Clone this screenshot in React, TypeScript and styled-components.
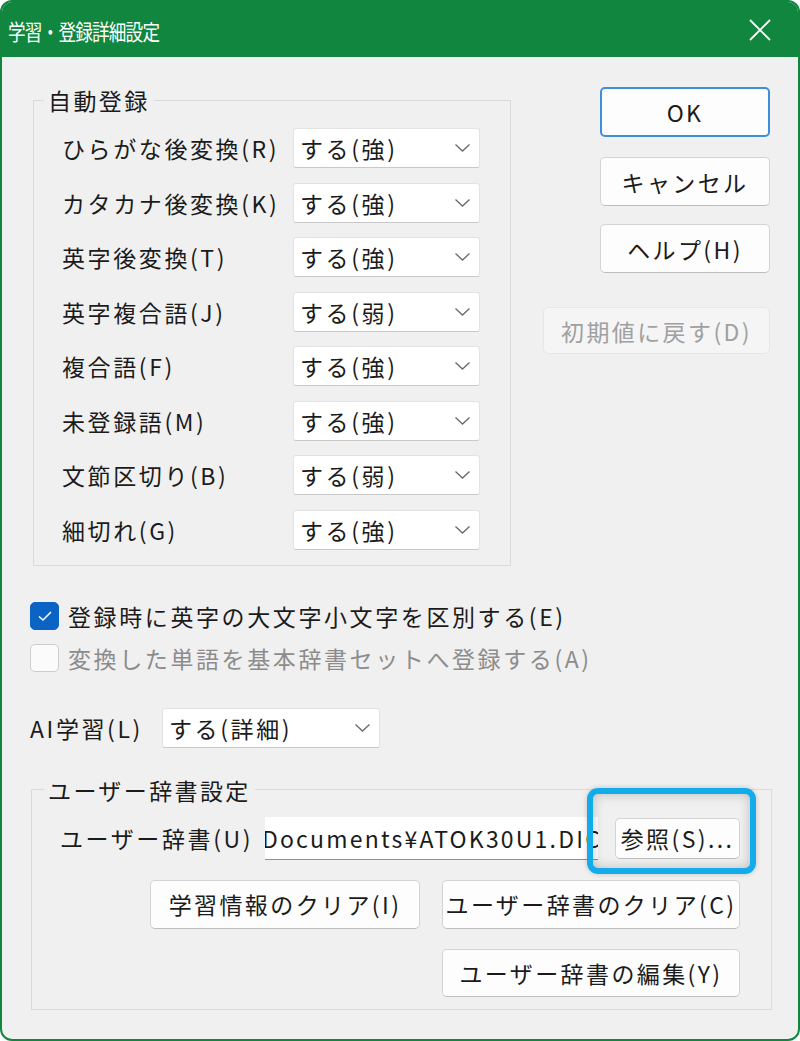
import React from 'react';
import styled, { createGlobalStyle } from 'styled-components';

const GlobalStyle = createGlobalStyle`
  html, body {
    margin: 0;
    padding: 0;
    background: #ffffff;
  }
  body {
    font-family: 'Noto Sans CJK JP', 'Noto Sans', sans-serif;
    color: #1b1b1b;
  }
  * {
    box-sizing: border-box;
  }
`;

const Window = styled.div`
  width: 800px;
  height: 1041px;
  display: flex;
  flex-direction: column;
  border: 2px solid #10863f;
  border-radius: 12px;
  overflow: hidden;
  background: #f0f0f0;
`;

const TitleBar = styled.div`
  height: 55px;
  flex-shrink: 0;
  display: flex;
  align-items: center;
  justify-content: space-between;
  padding: 0 27px 0 6px;
  background: #10863f;
  color: #ffffff;
`;

// the system caption font is narrower than anything installed here
const Title = styled.div`
  font-size: 22px;
  line-height: 26px;
  letter-spacing: -1px;
  white-space: nowrap;
  transform: scaleX(0.8);
  transform-origin: left center;
`;

const Body = styled.div`
  flex: 1;
  display: flex;
  flex-direction: column;
  padding: 29px 28px 0 28px;
`;

const TopRow = styled.div`
  display: flex;
  justify-content: space-between;
  align-items: flex-start;
`;

const Group = styled.fieldset<{ $width: number; $offset: number; $top?: number }>`
  width: ${({ $width }) => $width}px;
  margin: ${({ $top }) => $top ?? 0}px 0 0 ${({ $offset }) => $offset}px;
  padding: 0;
  border: 1px solid #dadada;
  border-radius: 0;
  min-width: 0;
`;

const Legend = styled.legend<{ $offset: number }>`
  margin-left: ${({ $offset }) => $offset}px;
  padding: 0 4px;
  font-size: 23px;
  line-height: 28px;
  letter-spacing: 2.4px;
`;

const OptionGrid = styled.div`
  display: grid;
  grid-template-columns: 231px 187px;
  row-gap: 14.5px;
  align-items: center;
  padding: 14px 0 15px 28px;
`;

const Label = styled.span<{ $muted?: boolean; $width?: number }>`
  ${({ $width }) => ($width ? `width: ${$width}px; flex-shrink: 0;` : '')}
  font-size: 23px;
  line-height: 28px;
  letter-spacing: 2.6px;
  white-space: nowrap;
  color: ${({ $muted }) => ($muted ? '#8c8c8c' : '#1b1b1b')};
`;

const Combo = styled.div<{ $width: number }>`
  width: ${({ $width }) => $width}px;
  height: 40px;
  flex-shrink: 0;
  display: flex;
  align-items: center;
  justify-content: space-between;
  padding: 0 8px 0 6px;
  background: #ffffff;
  border: 1px solid #e3e3e3;
  border-bottom-color: #c9c9c9;
  border-radius: 3px;
  font-size: 23px;
  letter-spacing: 2.6px;
  white-space: nowrap;
`;

const ButtonColumn = styled.div`
  width: 227px;
  margin-top: 1px;
  display: flex;
  flex-direction: column;
  align-items: flex-end;
`;

const Button = styled.button<{ $width: number; $height?: number; $primary?: boolean; $gap?: number }>`
  width: ${({ $width }) => $width}px;
  height: ${({ $height }) => $height ?? 49}px;
  margin-top: ${({ $gap }) => $gap ?? 0}px;
  padding: 0;
  flex-shrink: 0;
  font-family: inherit;
  font-size: 23px;
  letter-spacing: 2.4px;
  color: #1b1b1b;
  background: #fdfdfd;
  border: 1px solid #d4d4d4;
  border-bottom-color: #bdbdbd;
  border-radius: 5px;
  white-space: nowrap;
  ${({ $primary }) =>
    $primary &&
    `
    border: 2px solid #3d8fdc;
  `}

  &:disabled {
    color: #a0a0a0;
    background: #f5f5f5;
    border-color: #e6e6e6;
  }
`;

const CheckList = styled.div`
  display: flex;
  flex-direction: column;
  gap: 14px;
  margin-top: 36px;
`;

const CheckRow = styled.label`
  display: flex;
  align-items: center;
  gap: 9px;
  height: 28px;
`;

const Box = styled.span<{ $checked?: boolean }>`
  width: 29px;
  height: 28px;
  display: flex;
  align-items: center;
  justify-content: center;
  border-radius: 5px;
  background: ${({ $checked }) => ($checked ? '#0b63c4' : '#fbfbfb')};
  border: 1px solid ${({ $checked }) => ($checked ? '#0b63c4' : '#cdcdcd')};
`;

const InlineRow = styled.div`
  display: flex;
  align-items: center;
  gap: 14px;
  margin-top: 36px;
`;

const UserGroupBody = styled.div`
  display: flex;
  flex-direction: column;
  align-items: flex-end;
  gap: 20px;
  padding: 13px 31px 12px 28px;
`;

const PathRow = styled.div`
  align-self: stretch;
  display: flex;
  align-items: center;
`;

const PathField = styled.div`
  width: 333px;
  height: 43px;
  margin-left: 10px;
  flex-shrink: 0;
  display: flex;
  align-items: center;
  justify-content: flex-end;
  overflow: hidden;
  background: #ffffff;
  border-bottom: 1px solid #8f8f8f;
  font-size: 23px;
  letter-spacing: 2.2px;
  white-space: nowrap;
`;

const PathText = styled.span`
  margin-right: -4px;
`;

const BrowseSlot = styled.div`
  position: relative;
  margin-left: 17px;
  display: flex;
`;

const Highlight = styled.div`
  position: absolute;
  top: -30px;
  left: -28px;
  right: -16px;
  bottom: -15px;
  border: 6px solid #12acea;
  border-radius: 11px;
  box-shadow: inset 0 0 12px rgba(0, 0, 0, 0.22), 0 0 5px rgba(0, 0, 0, 0.2);
  pointer-events: none;
`;

const ButtonRow = styled.div`
  display: flex;
  gap: 22px;
`;

const Chevron = () => (
  <svg width="17" height="10" viewBox="0 0 17 10">
    <polyline points="1.5,1.5 8.5,8 15.5,1.5" fill="none" stroke="#6a6a6a" strokeWidth="1.3" />
  </svg>
);

const CloseIcon = () => (
  <svg width="22" height="22" viewBox="0 0 22 22">
    <path d="M1 1 L21 21 M21 1 L1 21" stroke="#ffffff" strokeWidth="1.8" fill="none" />
  </svg>
);

const CheckMark = () => (
  <svg width="16" height="12" viewBox="0 0 16 12">
    <polyline points="2,6.5 6,10 14,2" fill="none" stroke="#ffffff" strokeWidth="1.6" />
  </svg>
);

const autoOptions = [
  { label: 'ひらがな後変換(R)', value: 'する(強)' },
  { label: 'カタカナ後変換(K)', value: 'する(強)' },
  { label: '英字後変換(T)', value: 'する(強)' },
  { label: '英字複合語(J)', value: 'する(弱)' },
  { label: '複合語(F)', value: 'する(強)' },
  { label: '未登録語(M)', value: 'する(強)' },
  { label: '文節区切り(B)', value: 'する(弱)' },
  { label: '細切れ(G)', value: 'する(強)' },
];

export default function App() {
  return (
    <>
      <GlobalStyle />
      <Window>
        <TitleBar>
          <Title>学習・登録詳細設定</Title>
          <CloseIcon />
        </TitleBar>
        <Body>
          <TopRow>
            <Group $width={478} $offset={3}>
              <Legend $offset={10}>自動登録</Legend>
              <OptionGrid>
                {autoOptions.map((opt) => (
                  <React.Fragment key={opt.label}>
                    <Label>{opt.label}</Label>
                    <Combo $width={187}>
                      <span>{opt.value}</span>
                      <Chevron />
                    </Combo>
                  </React.Fragment>
                ))}
              </OptionGrid>
            </Group>
            <ButtonColumn>
              <Button $width={170} $height={50} $primary>OK</Button>
              <Button $width={170} $gap={20}>キャンセル</Button>
              <Button $width={170} $gap={18}>ヘルプ(H)</Button>
              <Button $width={227} $height={47} $gap={34} disabled>
                初期値に戻す(D)
              </Button>
            </ButtonColumn>
          </TopRow>

          <CheckList>
            <CheckRow>
              <Box $checked>
                <CheckMark />
              </Box>
              <Label>登録時に英字の大文字小文字を区別する(E)</Label>
            </CheckRow>
            <CheckRow>
              <Box />
              <Label $muted>変換した単語を基本辞書セットへ登録する(A)</Label>
            </CheckRow>
          </CheckList>

          <InlineRow>
            <Label $width={118}>AI学習(L)</Label>
            <Combo $width={218}>
              <span>する(詳細)</span>
              <Chevron />
            </Combo>
          </InlineRow>

          <Group $width={741} $offset={1} $top={28}>
            <Legend $offset={12}>ユーザー辞書設定</Legend>
            <UserGroupBody>
              <PathRow>
                <Label $width={195}>ユーザー辞書(U)</Label>
                <PathField>
                  <PathText>C:¥Users¥user¥Documents¥ATOK30U1.DIC</PathText>
                </PathField>
                <BrowseSlot>
                  <Button $width={125} $height={41}>参照(S)...</Button>
                  <Highlight />
                </BrowseSlot>
              </PathRow>
              <ButtonRow>
                <Button $width={270}>学習情報のクリア(I)</Button>
                <Button $width={298}>ユーザー辞書のクリア(C)</Button>
              </ButtonRow>
              <Button $width={298} $height={48}>ユーザー辞書の編集(Y)</Button>
            </UserGroupBody>
          </Group>
        </Body>
      </Window>
    </>
  );
}
